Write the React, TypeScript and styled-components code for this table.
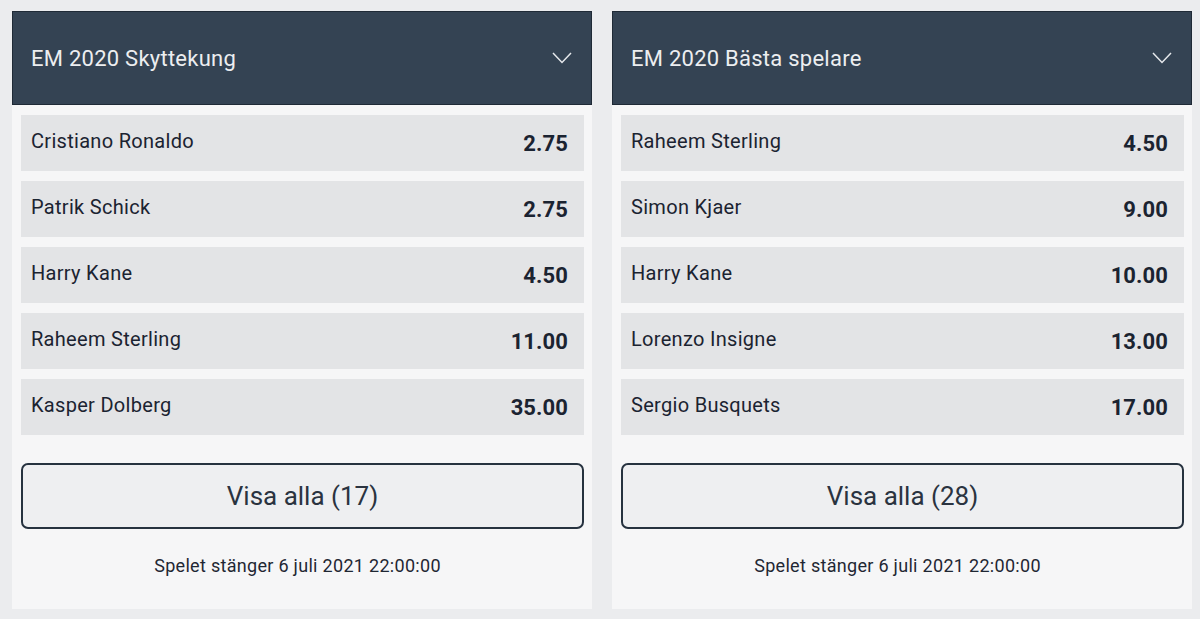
import React from 'react';
import styled, { createGlobalStyle } from 'styled-components';

interface Selection {
  name: string;
  odds: string;
}

interface Market {
  title: string;
  total: number;
  closes: string;
  selections: Selection[];
}

const markets: Market[] = [
  {
    title: 'EM 2020 Skyttekung',
    total: 17,
    closes: 'Spelet stänger 6 juli 2021 22:00:00',
    selections: [
      { name: 'Cristiano Ronaldo', odds: '2.75' },
      { name: 'Patrik Schick', odds: '2.75' },
      { name: 'Harry Kane', odds: '4.50' },
      { name: 'Raheem Sterling', odds: '11.00' },
      { name: 'Kasper Dolberg', odds: '35.00' },
    ],
  },
  {
    title: 'EM 2020 Bästa spelare',
    total: 28,
    closes: 'Spelet stänger 6 juli 2021 22:00:00',
    selections: [
      { name: 'Raheem Sterling', odds: '4.50' },
      { name: 'Simon Kjaer', odds: '9.00' },
      { name: 'Harry Kane', odds: '10.00' },
      { name: 'Lorenzo Insigne', odds: '13.00' },
      { name: 'Sergio Busquets', odds: '17.00' },
    ],
  },
];

const GlobalStyle = createGlobalStyle`
  html, body {
    margin: 0;
    padding: 0;
    background: #ebecee;
    font-family: Roboto, "Liberation Sans", sans-serif;
  }
`;

const Page = styled.div`
  display: grid;
  grid-template-columns: 580px 580px;
  column-gap: 20px;
  padding: 11px 8px 10px 12px;
  height: 619px;
  box-sizing: border-box;
`;

const Panel = styled.section`
  display: flex;
  flex-direction: column;
  background: #f6f6f7;
`;

const Header = styled.div`
  height: 94px;
  box-sizing: border-box;
  display: flex;
  align-items: center;
  justify-content: space-between;
  padding: 0 19px 0 18px;
  background: #344353;
  border: 1px solid #1f2a36;
  color: #eceef0;
  font-size: 22px;
  letter-spacing: 0.25px;
`;

const Chevron = () => (
  <svg width="20" height="12" viewBox="0 0 20 12" fill="none">
    <path d="M1 1 L10 10.5 L19 1" stroke="#e6e9ec" strokeWidth="1.5" />
  </svg>
);

const List = styled.div`
  display: flex;
  flex-direction: column;
  gap: 10px;
  padding: 10px 8px 0 9px;
`;

const Row = styled.div`
  height: 56px;
  display: flex;
  align-items: center;
  justify-content: space-between;
  padding: 0 16px 0 10px;
  background: #e3e4e6;
  color: #1b2331;
`;

const Name = styled.span`
  font-size: 20px;
  letter-spacing: 0.3px;
  margin-top: -4px;
`;

const Odds = styled.span`
  font-size: 22px;
  font-weight: 700;
  letter-spacing: 0.1px;
`;

const ShowAll = styled.button`
  margin: 28px 8px 0 9px;
  height: 66px;
  border: 2.5px solid #26323f;
  border-radius: 7px;
  background: #eeeff1;
  color: #2a3340;
  font-family: inherit;
  font-size: 26px;
  cursor: pointer;
`;

const Closes = styled.div`
  margin-top: 26px;
  padding-right: 9px;
  text-align: center;
  font-size: 18px;
  letter-spacing: 0.3px;
  color: #1f2733;
`;

const App = () => {
  return (
    <>
      <GlobalStyle />
      <Page>
        {markets.map((market) => (
          <Panel key={market.title}>
            <Header>
              <span>{market.title}</span>
              <Chevron />
            </Header>
            <List>
              {market.selections.map((s) => (
                <Row key={s.name}>
                  <Name>{s.name}</Name>
                  <Odds>{s.odds}</Odds>
                </Row>
              ))}
            </List>
            <ShowAll>Visa alla ({market.total})</ShowAll>
            <Closes>{market.closes}</Closes>
          </Panel>
        ))}
      </Page>
    </>
  );
};

export default App;
